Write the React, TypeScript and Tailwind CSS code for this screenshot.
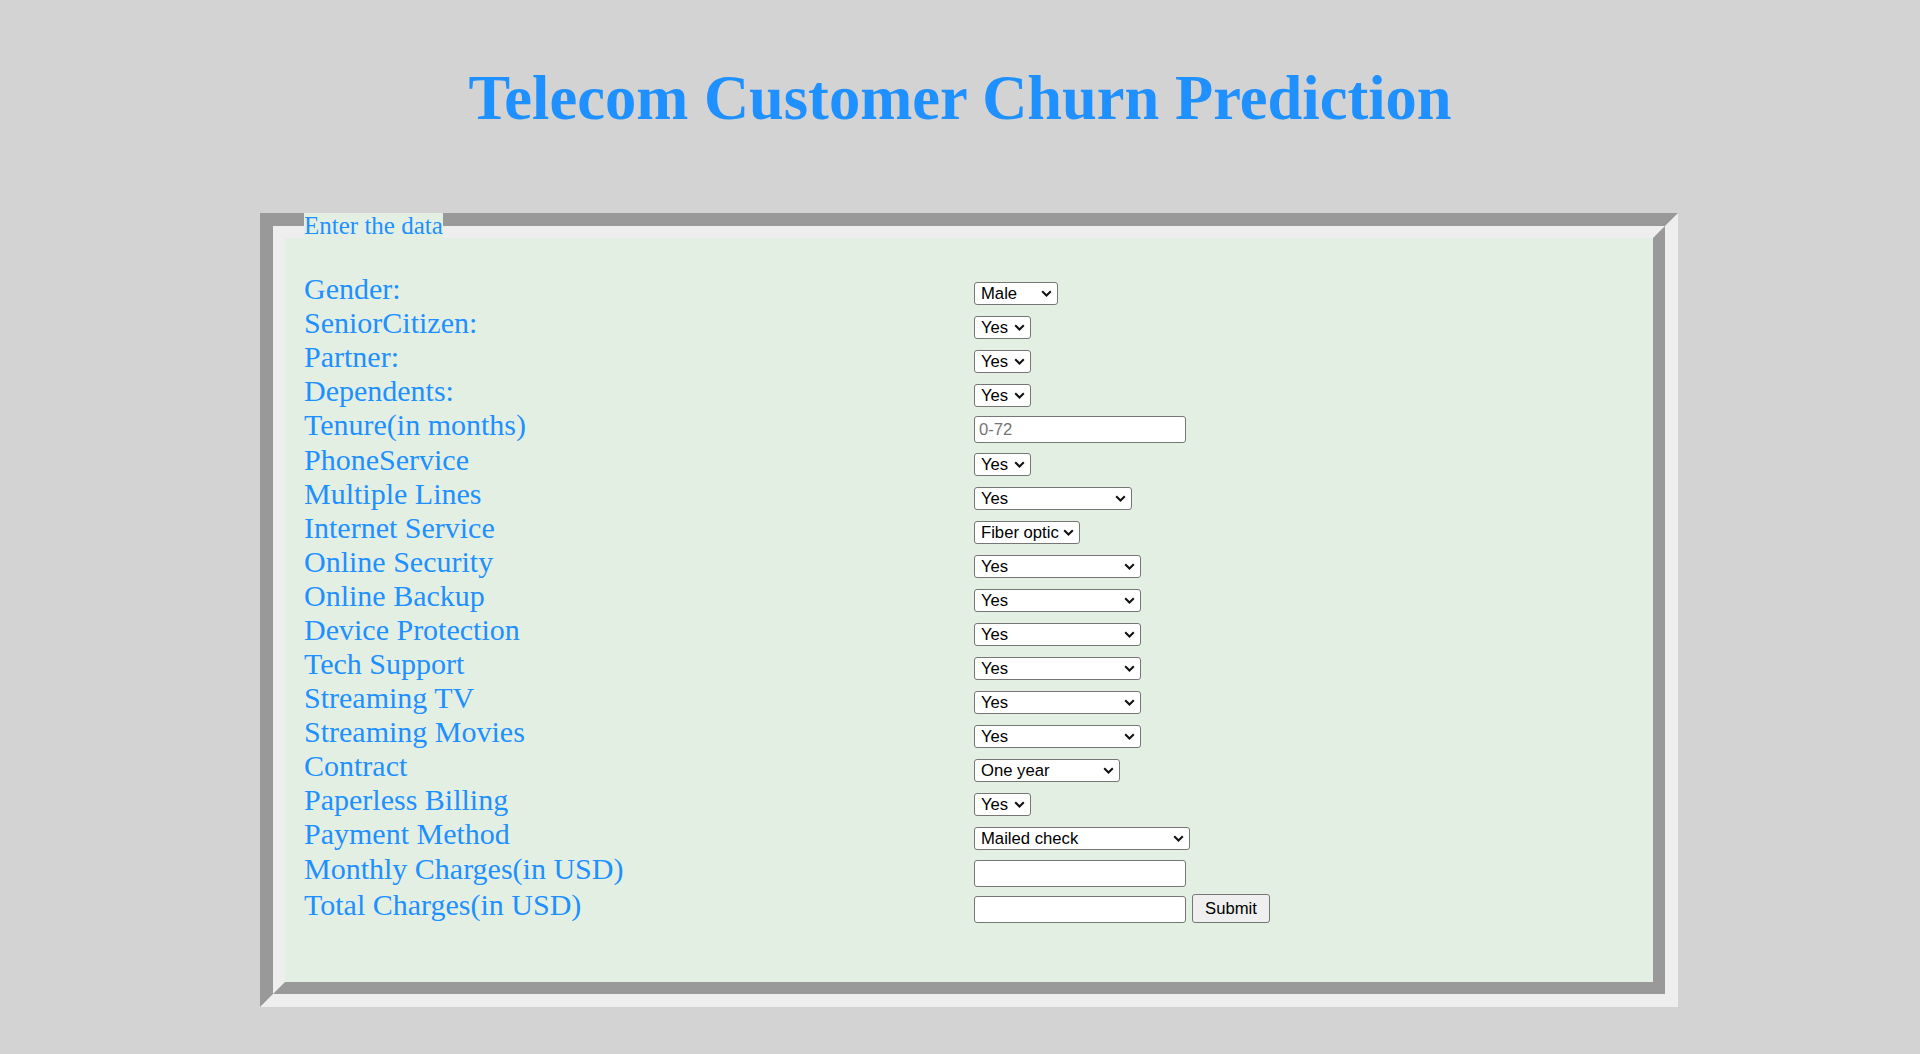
import React from "react";

type Row = {
  label: string;
  h: string;
  kind: "select" | "input" | "submit";
  w?: string;
  options?: string[];
  placeholder?: string;
};

const yesNo = ["Yes", "No"];
const yesNoInternet = ["Yes", "No", "No internet service"];

const rows: Row[] = [
  { label: "Gender:", h: "h-[34px]", kind: "select", w: "w-[84px]", options: ["Male", "Female"] },
  { label: "SeniorCitizen:", h: "h-[34px]", kind: "select", w: "w-[57px]", options: yesNo },
  { label: "Partner:", h: "h-[34px]", kind: "select", w: "w-[57px]", options: yesNo },
  { label: "Dependents:", h: "h-[34px]", kind: "select", w: "w-[57px]", options: yesNo },
  { label: "Tenure(in months)", h: "h-[35px]", kind: "input", placeholder: "0-72" },
  { label: "PhoneService", h: "h-[34px]", kind: "select", w: "w-[57px]", options: yesNo },
  { label: "Multiple Lines", h: "h-[34px]", kind: "select", w: "w-[158px]", options: ["Yes", "No", "No phone service"] },
  { label: "Internet Service", h: "h-[34px]", kind: "select", w: "w-[106px]", options: ["Fiber optic", "DSL", "No"] },
  { label: "Online Security", h: "h-[34px]", kind: "select", w: "w-[167px]", options: yesNoInternet },
  { label: "Online Backup", h: "h-[34px]", kind: "select", w: "w-[167px]", options: yesNoInternet },
  { label: "Device Protection", h: "h-[34px]", kind: "select", w: "w-[167px]", options: yesNoInternet },
  { label: "Tech Support", h: "h-[34px]", kind: "select", w: "w-[167px]", options: yesNoInternet },
  { label: "Streaming TV", h: "h-[34px]", kind: "select", w: "w-[167px]", options: yesNoInternet },
  { label: "Streaming Movies", h: "h-[34px]", kind: "select", w: "w-[167px]", options: yesNoInternet },
  { label: "Contract", h: "h-[34px]", kind: "select", w: "w-[146px]", options: ["One year", "Month-to-month", "Two year"] },
  { label: "Paperless Billing", h: "h-[34px]", kind: "select", w: "w-[57px]", options: yesNo },
  {
    label: "Payment Method",
    h: "h-[35px]",
    kind: "select",
    w: "w-[216px]",
    options: ["Mailed check", "Electronic check", "Bank transfer (automatic)", "Credit card (automatic)"],
  },
  { label: "Monthly Charges(in USD)", h: "h-[36px]", kind: "input" },
  { label: "Total Charges(in USD)", h: "h-[36px]", kind: "submit" },
];

const controlFont = "font-['Liberation_Sans',Arial,sans-serif] text-[16.67px] text-black";

const Chevron = () => (
  <svg
    className="pointer-events-none absolute right-[6px] top-[8px]"
    width="11"
    height="7"
    viewBox="0 0 11 7"
    fill="none"
  >
    <path d="M1.2 1.2 L5.5 5.5 L9.8 1.2" stroke="#111" strokeWidth="2" />
  </svg>
);

const SelectBox = ({ w, options }: { w?: string; options?: string[] }) => (
  <div className={`relative mt-[10px] ${w}`}>
    <select
      defaultValue={options?.[0]}
      className={`h-[23px] w-full appearance-none rounded-[3px] border border-[#767676] bg-white pl-[6px] pr-[20px] leading-[21px] outline-none ${controlFont}`}
    >
      {options?.map((o) => (
        <option key={o}>{o}</option>
      ))}
    </select>
    <Chevron />
  </div>
);

const TextBox = ({ placeholder }: { placeholder?: string }) => (
  <input
    type="text"
    placeholder={placeholder}
    className={`mt-[8px] h-[27px] w-[212px] rounded-[3px] border border-[#767676] bg-white px-[4px] outline-none placeholder:text-[#757575] ${controlFont}`}
  />
);

export default function App() {
  return (
    <div className="min-h-screen bg-[#d3d3d3] pb-[40px] font-['Liberation_Serif','Times_New_Roman',serif] text-[#1e90ff]">
      <h1 className="pt-[62px] text-center text-[62.5px] font-bold leading-[72px]">
        Telecom Customer Churn Prediction
      </h1>

      <form
        className="relative ml-[260px] mt-[79px] w-[1418px] border-[13px] border-t-[#999999] border-l-[#999999] border-r-[#eeeeee] border-b-[#eeeeee]"
        onSubmit={(e) => e.preventDefault()}
      >
        {/* legend sits over the top border */}
        <div className="absolute -top-[13px] left-[31px] h-[25px] bg-[#e4efe4] text-[25px] leading-[25px]">
          Enter the data
        </div>

        <div className="h-[768px] border-[12px] border-t-[#eeeeee] border-l-[#eeeeee] border-r-[#999999] border-b-[#999999] bg-[#e4efe4] pl-[19px] pt-[34px]">
          {rows.map((r) => (
            <div key={r.label} className={`flex items-start ${r.h}`}>
              <label className="w-[670px] shrink-0 text-[30px] leading-[34px]">{r.label}</label>
              {r.kind === "select" && <SelectBox w={r.w} options={r.options} />}
              {r.kind === "input" && <TextBox placeholder={r.placeholder} />}
              {r.kind === "submit" && (
                <>
                  <TextBox />
                  <button
                    type="submit"
                    className={`ml-[6px] mt-[6px] h-[29px] w-[78px] rounded-[3px] border border-[#767676] bg-[#efefef] ${controlFont}`}
                  >
                    Submit
                  </button>
                </>
              )}
            </div>
          ))}
        </div>
      </form>
    </div>
  );
}
